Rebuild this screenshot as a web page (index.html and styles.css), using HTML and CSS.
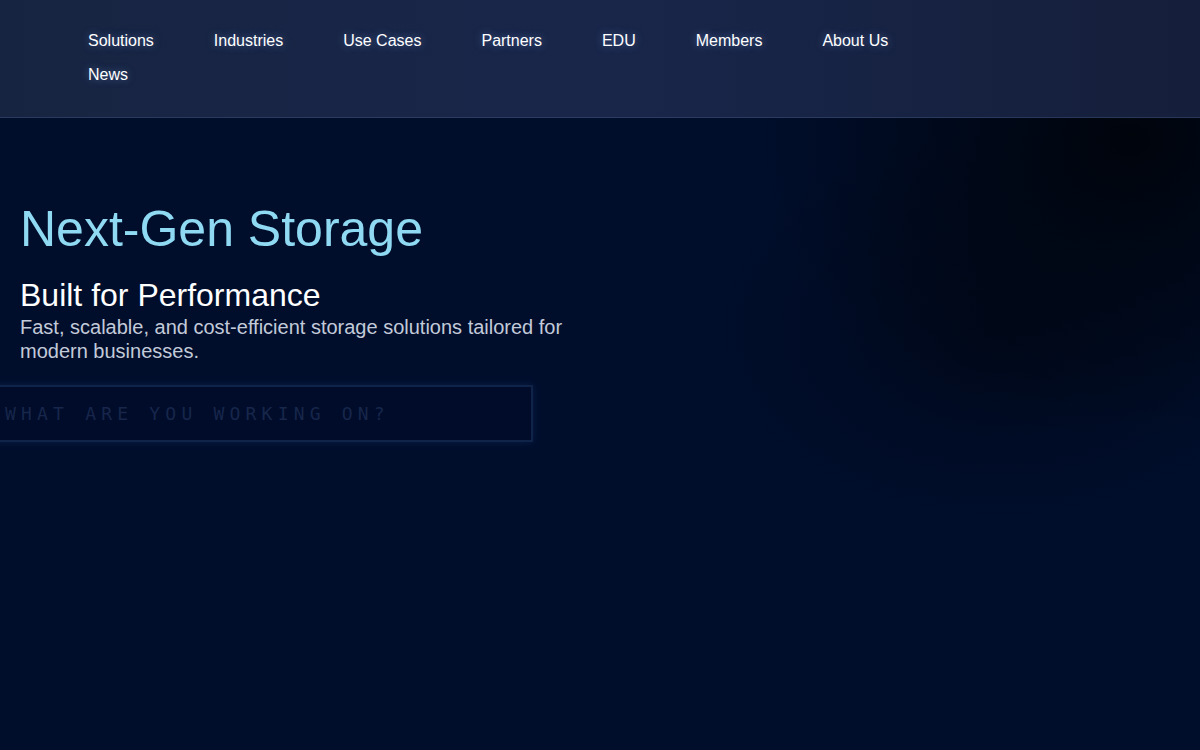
FILE: index.html
```html
<!DOCTYPE html>
<html lang="en">
<head>
  <meta charset="UTF-8" />
  <meta name="viewport" content="width=device-width, initial-scale=1.0">
  <title>Next-Gen Storage</title>
  <link rel="stylesheet" href="styles.css">
</head>
<body>

  <!-- top navigation -->
  <header class="site-header">
    <nav class="main-nav">
      <a href="#">Solutions</a>
      <a href="#">Industries</a>
      <a href="#">Use Cases</a>
      <a href="#">Partners</a>
      <a href="#">EDU</a>
      <a href="#">Members</a>
      <a href="#">About Us</a>
      <a href="#">News</a>
    </nav>
  </header>

  <!-- hero -->
  <main class="hero">
    <h1 class="hero-title">Next-Gen Storage</h1>
    <h2 class="hero-sub">Built for Performance</h2>
    <p class="hero-text">Fast, scalable, and cost-efficient storage solutions tailored for modern businesses.</p>
    <input class="hero-input" type="text" placeholder="WHAT ARE YOU WORKING ON?">
  </main>

</body>
</html>
```

FILE: styles.css
```css
html, body {
  margin: 0;
  padding: 0;
  height: 100%;
  font-family: 'Liberation Sans', Arial, sans-serif;
  color: white;
  overflow: hidden;
}

body {
  background:
    radial-gradient(ellipse 380px 300px at 1130px 140px, rgba(0, 4, 10, 0.95), rgba(0, 4, 10, 0) 100%),
    radial-gradient(ellipse 300px 200px at 1000px 330px, rgba(0, 4, 12, 0.5), rgba(0, 4, 12, 0) 100%),
    #000e2c;
}

.site-header {
  background: linear-gradient(to right, #172441 0%, #19264a 50%, #151f3b 100%);
  border-bottom: 1px solid rgba(120, 150, 200, 0.2);
  padding: 32px 0 33px;
}

.main-nav {
  display: flex;
  flex-wrap: wrap;
  column-gap: 60px;
  row-gap: 16px;
  width: 880px;
  margin-left: 88px;
}

.main-nav a {
  color: white;
  text-decoration: none;
  font-size: 16px;
  line-height: 18px;
  text-shadow: 0 0 8px rgba(140, 180, 255, 0.45);
}

.hero {
  padding: 82px 20px 0;
  max-width: 560px;
}

.hero-title {
  margin: 0;
  font-size: 50px;
  font-weight: normal;
  line-height: 58px;
  color: #8fd9f2;
}

.hero-sub {
  margin: 19px 0 0;
  font-size: 32px;
  font-weight: normal;
  line-height: 36px;
}

.hero-text {
  margin: 2px 0 0;
  font-size: 20px;
  line-height: 24px;
  color: #c3cad9;
}

.hero-input {
  display: block;
  box-sizing: border-box;
  margin: 22px 0 0 -50px;
  width: 563px;
  height: 57px;
  padding: 0 0 0 33px;
  background: #000c2a;
  border: 2px solid rgba(40, 70, 120, 0.4);
  box-shadow: 0 0 8px rgba(40, 80, 150, 0.25);
  font-family: 'DejaVu Sans Mono', monospace;
  font-size: 18px;
  letter-spacing: 5.2px;
  color: #3a4a70;
  outline: none;
}

.hero-input::placeholder {
  color: #17264a;
}
```
